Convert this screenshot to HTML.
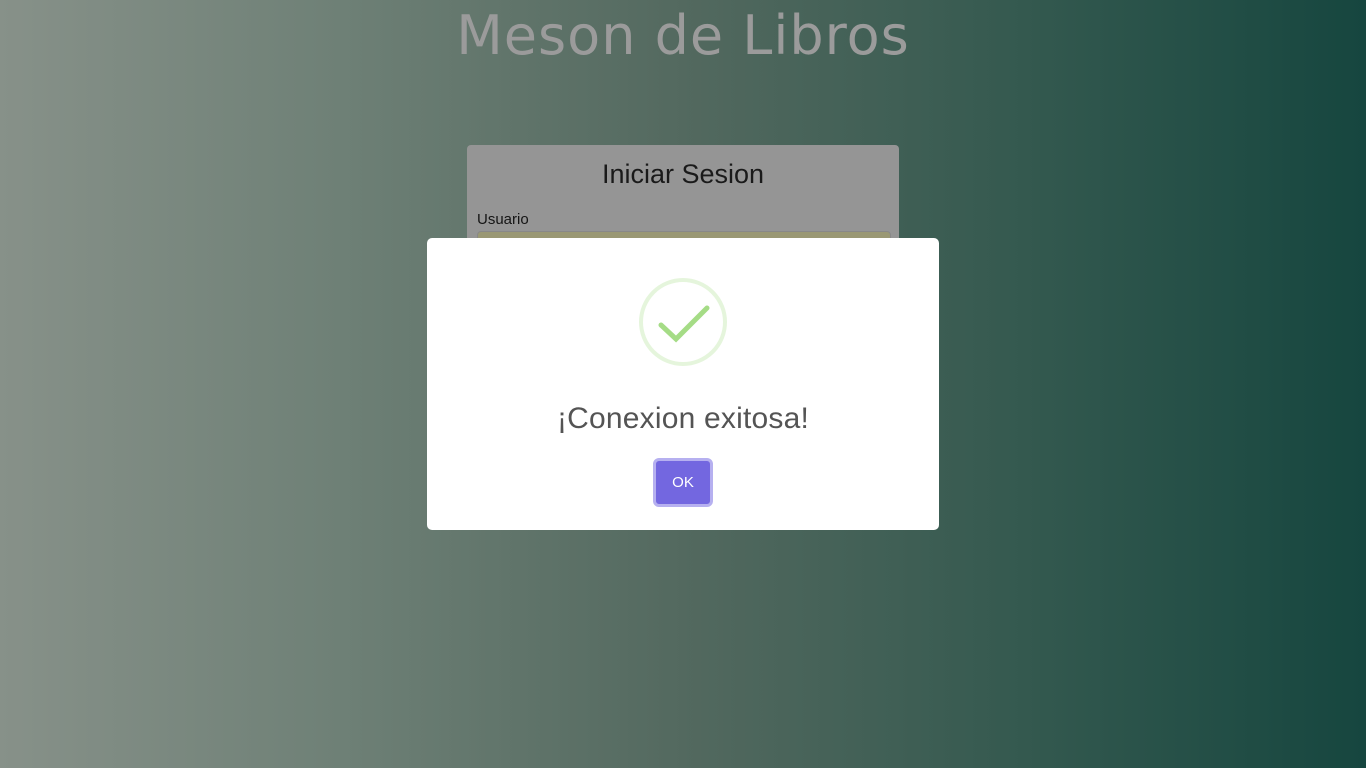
<!DOCTYPE html>
<html><head><style>
html,body{margin:0;width:1366px;height:768px;overflow:hidden}
body{background:linear-gradient(to right,#879189 0%,#6e8076 25%,#53695f 50%,#34594f 75%,#16463f 100%);font-family:"Liberation Sans","DejaVu Sans",sans-serif;position:relative}
h1{position:absolute;left:0;right:0;top:4px;margin:0;text-align:center;font-weight:normal;font-size:54px;letter-spacing:1px;color:#9b9b9b;font-family:"DejaVu Sans",sans-serif}
.card{position:absolute;left:467px;top:145px;width:432px;height:200px;background:#959595;border-radius:4px}
.card h2{margin:0;position:absolute;top:14px;width:100%;text-align:center;font-weight:normal;font-size:27px;color:#1a1a1a}
.card .lbl{position:absolute;left:10px;top:66px;font-size:15px;color:#151515}
.card .inp{position:absolute;left:10px;top:86px;width:412px;height:30px;background:#9a9874;border:1px solid #888;border-radius:4px}
.modal{position:absolute;left:427px;top:238px;width:512px;height:292px;background:#fff;border-radius:5px}
.circ{position:absolute;left:212px;top:40px;width:80px;height:80px;border:4px solid #e5f5dc;border-radius:50%}
.msg{position:absolute;top:164px;width:100%;text-align:center;font-size:30px;letter-spacing:0.2px;color:#545454}
.ok{position:absolute;left:226px;top:220px;width:60px;height:49px;background:#7367e0;border:3px solid #b6b0f0;border-radius:6px;box-sizing:border-box;color:#fff;font-size:15px;text-align:center;line-height:43px}
</style></head><body>
<h1>Meson de Libros</h1>
<div class="card"><h2>Iniciar Sesion</h2><div class="lbl">Usuario</div><div class="inp"></div></div>
<div class="modal">
<div class="circ"></div>
<svg style="position:absolute;left:212px;top:40px" width="88" height="88" viewBox="0 0 88 88"><path d="M22 47 L37 61 L68 30" fill="none" stroke="#a5dc86" stroke-width="5" stroke-linecap="round"/></svg>
<div class="msg">¡Conexion exitosa!</div>
<div class="ok">OK</div>
</div>
</body></html>
